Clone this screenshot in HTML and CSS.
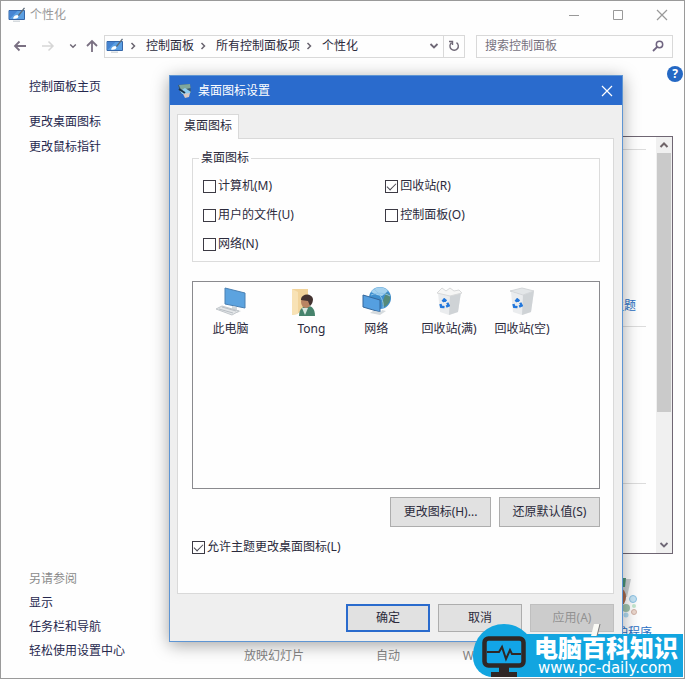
FILE: index.html
```html
<!DOCTYPE html>
<html lang="zh-CN">

<head>
    <meta charset="UTF-8">
    <title>个性化</title>
    <meta name="viewport" content="width=device-width, initial-scale=1.0">
    <link rel="stylesheet" href="styles.css">
</head>

<body>
    <!-- 共用图标 -->
    <svg class="defs" width="0" height="0" aria-hidden="true">
        <symbol id="icon-personal" viewBox="0 0 18 16">
            <path d="M1 3.500h15.500v9H1z" fill="#5b9fe2" stroke="#3566a8" />
            <path d="M1.500 4h8l-8 8z" fill="#4684d2" />
            <path d="M5 13.500h7v1.500H5z" fill="#d5dade" />
            <path d="M5 11.500c.5-2.500 2.500-3.500 4.500-3.500l1 1.500c-.5 2-3 2.500-5.500 2z" fill="#fff" />
            <path d="M10 8l6-7.500 1 .8-6 7.700z" fill="#5d6b78" />
        </symbol>
        <symbol id="icon-chevron" viewBox="0 0 10 10">
            <path d="M3.500 2l3 3-3 3" fill="none" stroke="#6a6570" stroke-width="1.500" />
        </symbol>
        <symbol id="icon-down" viewBox="0 0 10 10">
            <path d="M1.500 3l3.500 3.500L8.500 3" fill="none" stroke="#6f6876" stroke-width="1.800" />
        </symbol>
        <symbol id="icon-close" viewBox="0 0 12 12">
            <path d="M1 1l10 10M11 1L1 11" fill="none" stroke="currentColor" stroke-width="1.200" />
        </symbol>
        <symbol id="icon-recycle" viewBox="0 0 10 10">
            <path d="M3.200 3.300L4.800 1.300l1.900 1.500M7.500 4.300l1.300 2.500-2.300 1M5 8.300L2 8 1.300 5.400" fill="none" stroke="#2277dc" stroke-width="2.200" />
        </symbol>
    </svg>

    <div class="window">
        <!-- 窗口标题栏 -->
        <header class="titlebar">
            <svg class="app-icon" width="18" height="16"><use href="#icon-personal" /></svg>
            <span class="titlebar-text">个性化</span>
            <button class="win-btn" type="button" aria-label="最小化">
                <svg width="12" height="12" viewBox="0 0 12 12"><path d="M1 6.500h10" stroke="currentColor" /></svg>
            </button>
            <button class="win-btn" type="button" aria-label="最大化">
                <svg width="12" height="12" viewBox="0 0 12 12"><path d="M1.500 1.500h9v9h-9z" fill="none" stroke="currentColor" /></svg>
            </button>
            <button class="win-btn" type="button" aria-label="关闭">
                <svg width="12" height="12"><use href="#icon-close" /></svg>
            </button>
        </header>

        <!-- 导航和地址栏 -->
        <nav class="toolbar">
            <button class="nav-btn" type="button" aria-label="后退">
                <svg width="14" height="12" viewBox="0 0 14 12"><path d="M6.500 1.500L2 6l4.500 4.500M2 6h11" fill="none" stroke="#7a7082" stroke-width="1.800" /></svg>
            </button>
            <button class="nav-btn" type="button" aria-label="前进">
                <svg width="14" height="12" viewBox="0 0 14 12"><path d="M7.500 1.500L12 6l-4.500 4.500M12 6H1" fill="none" stroke="#d6d6d6" stroke-width="1.500" /></svg>
            </button>
            <button class="nav-btn nav-recent" type="button" aria-label="最近浏览的位置">
                <svg width="8" height="8"><use href="#icon-down" /></svg>
            </button>
            <button class="nav-btn nav-up" type="button" aria-label="上移">
                <svg width="14" height="14" viewBox="0 0 14 14"><path d="M2 7l5-5 5 5M7 2v11" fill="none" stroke="#7a7082" stroke-width="1.800" /></svg>
            </button>
            <div class="address">
                <svg width="18" height="16"><use href="#icon-personal" /></svg>
                <svg class="sep" width="10" height="10"><use href="#icon-chevron" /></svg>
                <a class="crumb" href="#">控制面板</a>
                <svg class="sep" width="10" height="10"><use href="#icon-chevron" /></svg>
                <a class="crumb" href="#">所有控制面板项</a>
                <svg class="sep" width="10" height="10"><use href="#icon-chevron" /></svg>
                <a class="crumb" href="#">个性化</a>
                <button class="address-drop" type="button" aria-label="以前的位置">
                    <svg width="10" height="10"><use href="#icon-down" /></svg>
                </button>
                <button class="address-refresh" type="button" aria-label="刷新">
                    <svg width="12" height="12" viewBox="0 0 12 12"><path d="M3.500 2.800a4.200 4.200 0 1 0 5-.2M1 1.500h3.500V5" fill="none" stroke="#6f6876" stroke-width="1.400" /></svg>
                </button>
            </div>
            <div class="search">
                <input class="search-input" type="text" aria-label="搜索控制面板" placeholder="搜索控制面板">
                <svg width="12" height="12" viewBox="0 0 12 12"><circle cx="7.500" cy="4.500" r="3.200" fill="none" stroke="#6f6480" stroke-width="1.500" /><path d="M5.200 6.800L1 11" stroke="#6f6480" stroke-width="1.800" /></svg>
            </div>
        </nav>

        <button class="help" type="button" aria-label="帮助">?</button>

        <div class="content">
            <!-- 左侧链接 -->
            <aside class="sidebar">
                <a class="side-link side-home" href="#">控制面板主页</a>
                <a class="side-link" href="#">更改桌面图标</a>
                <a class="side-link" href="#">更改鼠标指针</a>
                <div class="see-also">
                    <span class="see-also-title">另请参阅</span>
                    <a class="side-link" href="#">显示</a>
                    <a class="side-link" href="#">任务栏和导航</a>
                    <a class="side-link" href="#">轻松使用设置中心</a>
                </div>
            </aside>

            <!-- 主题列表 -->
            <main class="main">
                <div class="themes">
                    <div class="theme-list">
                        <section class="theme-group theme-group-mine"><a class="blue-link" href="#">保存主题</a></section>
                        <section class="theme-group theme-group-default"></section>
                        <section class="theme-group"></section>
                    </div>
                    <div class="scrollbar">
                        <svg width="10" height="10" viewBox="0 0 10 10"><path d="M1.500 7L5 3.500 8.500 7" fill="none" stroke="#6f6468" stroke-width="2" /></svg>
                        <div class="scroll-track"><div class="scroll-thumb"></div></div>
                        <svg width="10" height="10"><use href="#icon-down" /></svg>
                    </div>
                </div>
                <div class="settings">
                    <div class="setting"><span class="setting-value">放映幻灯片</span></div>
                    <div class="setting"><span class="setting-value">自动</span></div>
                    <div class="setting"><span class="setting-value">Windows 默认</span></div>
                    <div class="setting">
                        <svg width="48" height="48" viewBox="0 0 48 48">
                            <path d="M29 6h10l-4 18h-8z" fill="#c9ced0" />
                            <path d="M29 5h5l-1 9h-4z" fill="#4c9478" />
                            <ellipse cx="28" cy="24" rx="6" ry="9" fill="#a86a4c" />
                            <circle cx="41" cy="26" r="3.500" fill="#c5e4f5" stroke="#8cc2e4" />
                            <circle cx="34" cy="35" r="4" fill="#9fc4ae" />
                            <circle cx="42" cy="39" r="2.500" fill="#edd9cf" stroke="#d3b4a8" />
                            <circle cx="42" cy="33" r="2" fill="#c4e8cf" />
                            <circle cx="34" cy="42" r="2.500" fill="#b2dcf2" />
                        </svg>
                        <a class="blue-link" href="#">屏幕保护程序</a>
                    </div>
                </div>
            </main>
        </div>

        <!-- 桌面图标设置对话框 -->
        <form class="dialog" role="dialog" aria-labelledby="dialog-title">
            <div class="dialog-title">
                <svg width="16" height="16" viewBox="0 0 16 16">
                    <path d="M1 2l12-1 1 9-10 1z" fill="#3d5a6c" />
                    <path d="M2 2l11-1 .5 4L4 7z" fill="#7fa79c" />
                    <path d="M3 8l5-3 6 4-2 2H5z" fill="#8fcdf0" />
                    <path d="M2 6l6 4" stroke="#1b3348" stroke-width="2" />
                    <path d="M6 11l7-1-1 4-4 1z" fill="#d8c8c2" />
                </svg>
                <span id="dialog-title">桌面图标设置</span>
                <button class="dialog-close" type="button" aria-label="关闭">
                    <svg width="12" height="12"><use href="#icon-close" /></svg>
                </button>
            </div>
            <div class="dialog-body">
                <button class="tab" type="button">桌面图标</button>
                <div class="tab-panel">
                    <fieldset class="group">
                        <legend>桌面图标</legend>
                        <label class="check"><input type="checkbox">计算机(M)</label>
                        <label class="check"><input type="checkbox" checked>回收站(R)</label>
                        <label class="check"><input type="checkbox">用户的文件(U)</label>
                        <label class="check"><input type="checkbox">控制面板(O)</label>
                        <label class="check"><input type="checkbox">网络(N)</label>
                    </fieldset>

                    <div class="icon-list">
                        <div class="icon-item">
                            <svg width="32" height="32" viewBox="0 0 32 32">
                                <path d="M11 3l20 5v15l-20-4z" fill="#5ca3df" stroke="#4a80b2" />
                                <path d="M18 21l5 1v3l4 1-4 2-8-3 3-1z" fill="#d3d8db" />
                                <path d="M2 24l6-3 17 5-7 4z" fill="#e3e6e8" stroke="#c2c7cb" />
                                <path d="M5 24l14 4M8 22l14 4" stroke="#b8bec4" />
                            </svg>
                            <span>此电脑</span>
                        </div>
                        <div class="icon-item icon-item-user">
                            <svg width="32" height="32" viewBox="0 0 32 32">
                                <path d="M5 4h16v18l-11 7-5 1z" fill="#f2d49b" />
                                <path d="M5 4l6 3v22l-6 1z" fill="#f8e2b5" />
                                <path d="M12 31c0-8 5-10 9-10s7 3 7 10z" fill="#46836c" />
                                <path d="M15 23l3 7 3-7z" fill="#d7e6df" />
                                <ellipse cx="19" cy="17" rx="5" ry="6" fill="#b98462" />
                                <path d="M14 14c1-6 11-6 12 0 0 3-1 5-3 7l-2-5-7-1z" fill="#443331" />
                            </svg>
                            <span>Tong</span>
                        </div>
                        <div class="icon-item">
                            <svg width="32" height="32" viewBox="0 0 32 32">
                                <circle cx="20" cy="13" r="11" fill="#3f8fce" />
                                <path d="M11 7c4-6 13-6 17-1l-6 5-5-1z" fill="#a5d2ef" />
                                <path d="M26 8l4 2c1 6-2 10-6 12l-2-4z" fill="#568a79" />
                                <path d="M14 4c7 6 10 12 9 19M11 10c7-3 14-2 19 1" fill="none" stroke="#8ec4ea" />
                                <path d="M3 10l17 5v12L3 22z" fill="#559fe0" stroke="#35679b" />
                                <path d="M13 26l8 1 1-2 4 1-6 4-10-2z" fill="#d5dadd" />
                            </svg>
                            <span>网络</span>
                        </div>
                        <div class="icon-item">
                            <svg width="32" height="32" viewBox="0 0 32 32">
                                <path d="M5 8l12 2 11-3-3 20-9 3-9-3z" fill="#eaecee" />
                                <path d="M17 10l11-3-3 20-9 3z" fill="#cfd3d6" />
                                <path d="M4 8l5-5 4 3 4-3 4 3 5-1 3 3-12 3z" fill="#f6f6f5" stroke="#d8d9da" />
                                <use href="#icon-recycle" x="6" y="13" width="11" height="11" />
                            </svg>
                            <span>回收站(满)</span>
                        </div>
                        <div class="icon-item">
                            <svg width="32" height="32" viewBox="0 0 32 32">
                                <path d="M5 7l12 3 11-4-3 21-9 3-9-3z" fill="#eaecee" />
                                <path d="M17 10l11-4-3 21-9 3z" fill="#cfd3d6" />
                                <path d="M4 6l12-3 12 3-11 4z" fill="#e3e6e8" stroke="#d3d6d9" />
                                <use href="#icon-recycle" x="6" y="13" width="11" height="11" />
                            </svg>
                            <span>回收站(空)</span>
                        </div>
                    </div>

                    <div class="list-actions">
                        <button class="btn" type="button">更改图标(H)...</button>
                        <button class="btn" type="button">还原默认值(S)</button>
                    </div>
                    <label class="check"><input type="checkbox" checked>允许主题更改桌面图标(L)</label>
                </div>
                <div class="dialog-actions">
                    <button class="btn btn-default" type="button">确定</button>
                    <button class="btn" type="button">取消</button>
                    <button class="btn" type="button" disabled>应用(A)</button>
                </div>
            </div>
        </form>

        <!-- 站点水印 -->
        <div class="watermark">
            <svg class="watermark-pen" width="16" height="12" viewBox="0 0 16 12"><path d="M4 0h6L7 12H1z" fill="#fafaf5" /><path d="M10 0L7 12" stroke="#777" /></svg>
            <div class="watermark-logo">
                <svg width="46" height="42" viewBox="0 0 46 42">
                    <rect x="2.500" y="2.500" width="39" height="27" rx="4" fill="#12a5e8" stroke="#2f2725" stroke-width="4.500" />
                    <path d="M5 16h12l3-5 4 12 4-9 2 4h9" fill="none" stroke="#2f2725" stroke-width="2" />
                    <path d="M17 31h10v5h8v5H9v-5h8z" fill="#2f2725" />
                </svg>
            </div>
            <div class="watermark-text">
                <span class="watermark-name">电脑百科知识</span>
                <span class="watermark-url">www.pc-daily.com</span>
            </div>
        </div>
    </div>
</body>

</html>
```
FILE: styles.css
```css
* {
    box-sizing: border-box;
}

body {
    margin: 0;
    font-family: "Noto Sans", "Noto Sans CJK SC", sans-serif;
    font-size: 12px;
    line-height: 16px;
    color: #2b2a3c;
    background-color: #fefefe;
}

button,
input {
    font: inherit;
    color: inherit;
}

button {
    padding: 0;
    border: none;
    background: none;
}

a {
    color: inherit;
    text-decoration: none;
}

svg {
    display: block;
    flex: none;
}

.defs {
    position: absolute;
}

.window {
    position: relative;
    display: flex;
    flex-direction: column;
    min-height: 100vh;
    overflow: hidden;
    border: 1px solid #9a9a9a;
}

/* 标题栏 */
.titlebar {
    display: flex;
    align-items: center;
    height: 28px;
    padding-left: 7px;
    color: #999;
}

.titlebar-text {
    flex: 1;
    margin-left: 4px;
}

.win-btn {
    display: flex;
    align-items: center;
    justify-content: center;
    width: 44px;
    height: 28px;
}

/* 地址栏 */
.toolbar {
    display: flex;
    align-items: center;
    height: 24px;
    margin-top: 5px;
    padding: 0 11px 0 12px;
}

.nav-btn {
    margin-right: 14px;
}

.nav-recent {
    margin-right: 8px;
}

.nav-up {
    margin-right: 5px;
}

.address {
    display: flex;
    align-items: center;
    flex: 2;
    height: 23px;
    padding-left: 1px;
    border: 1px solid #d9d9d9;
}

.sep {
    margin: 0 8px 0 4px;
}

.address-drop {
    margin-left: auto;
    padding: 0 4px;
}

.address-refresh {
    height: 21px;
    padding: 0 4px;
    border-left: 1px solid #d9d9d9;
}

.search {
    display: flex;
    align-items: center;
    flex: 1;
    min-width: 0;
    height: 23px;
    margin-left: 11px;
    padding: 0 8px;
    border: 1px solid #d9d9d9;
}

.search-input {
    flex: 1;
    min-width: 0;
    padding: 0;
    border: none;
    outline: none;
    background: none;
}

.search-input::placeholder {
    color: #77727e;
}

.help {
    position: absolute;
    top: 65px;
    right: 1px;
    width: 16px;
    height: 16px;
    border-radius: 50%;
    background-color: #2468c4;
    color: #fff;
    font-weight: bold;
}

/* 左侧 */
.content {
    display: flex;
    flex: 1;
}

.sidebar {
    display: flex;
    flex-direction: column;
    gap: 9px;
    width: 216px;
    padding: 21px 0 19px 28px;
}

.side-home {
    margin-bottom: 10px;
}

.side-link {
    color: #26284e;
}

.see-also {
    display: flex;
    flex-direction: column;
    gap: 8px;
    margin-top: auto;
}

.see-also-title {
    color: #8a8a8a;
}

/* 主题列表 */
.main {
    display: flex;
    flex-direction: column;
    flex: 1;
    padding: 78px 11px 14px 0;
}

.themes {
    display: flex;
    flex: 1;
    border: 1px solid #6f6673;
}

.theme-list {
    flex: 1;
    padding: 12px 10px 0 0;
}

.theme-group {
    border-top: 1px solid #dcdcdc;
}

.theme-group-mine {
    height: 177px;
    padding: 148px 10px 0 0;
    text-align: right;
}

.theme-group-default {
    height: 157px;
}

.blue-link {
    color: #2a6fc4;
}

.scrollbar {
    display: flex;
    flex-direction: column;
    align-items: center;
    width: 16px;
    padding: 3px 0;
    background-color: #f0f0f0;
}

.scroll-track {
    flex: 1;
    width: 14px;
    padding-top: 3px;
}

.scroll-thumb {
    height: 67%;
    background-color: #cacaca;
}

.settings {
    display: flex;
    height: 110px;
    padding-top: 19px;
}

.setting {
    display: flex;
    flex-direction: column;
    align-items: center;
    flex: 1;
}

.setting .blue-link {
    margin-top: 4px;
}

.setting-value {
    margin-top: auto;
    color: #858585;
}

/* 对话框 */
.dialog {
    position: absolute;
    top: 74px;
    left: 168px;
    right: 61px;
    border: 1px solid #5e95d3;
    background-color: #efefef;
    box-shadow: 0 3px 16px rgba(0, 0, 0, 0.36);
}

.dialog-title {
    display: flex;
    align-items: center;
    gap: 5px;
    height: 29px;
    padding: 0 9px 0 7px;
    background-color: #2a6bcd;
    color: #fff;
}

.dialog-close {
    margin-left: auto;
}

.dialog-body {
    padding: 9px 8px 9px 7px;
}

.tab {
    position: relative;
    display: block;
    height: 25px;
    margin-bottom: -1px;
    padding: 0 6px 3px;
    border: 1px solid #d9d9d9;
    border-bottom: none;
    background-color: #fefefe;
}

.tab-panel {
    padding: 11px 13px 38px 14px;
    border: 1px solid #d9d9d9;
    background-color: #fefefe;
}

.group {
    display: grid;
    grid-template-columns: 46% 54%;
    row-gap: 13px;
    margin: 0;
    padding: 12px 0 9px 10px;
    border: 1px solid #dcdcdc;
}

.group legend {
    margin-left: -4px;
    padding: 0 2px;
}

.check {
    display: flex;
    align-items: center;
    gap: 2px;
}

.check input {
    appearance: none;
    width: 13px;
    height: 13px;
    margin: 0;
    border: 1px solid #3c3a44;
    background-color: #fff;
}

.check input:checked::before {
    content: "";
    display: block;
    width: 8px;
    height: 4px;
    margin: 2px 0 0 1px;
    border: solid #4a4852;
    border-width: 0 0 1px 1px;
    transform: rotate(-45deg);
}

.icon-list {
    display: flex;
    height: 208px;
    margin-top: 19px;
    padding: 3px 0 0 1px;
    border: 1px solid #8a8a8e;
}

.icon-item {
    display: flex;
    flex-direction: column;
    align-items: center;
    gap: 4px;
    width: 18%;
}

.icon-item-user span {
    padding-left: 16px;
}

.list-actions {
    display: flex;
    justify-content: flex-end;
    gap: 8px;
    margin: 8px 0 12px;
}

.btn {
    width: 84px;
    height: 28px;
    border: 1px solid #adadad;
    background-color: #e1e1e1;
}

.list-actions .btn {
    width: 101px;
    height: 30px;
}

.btn-default {
    border: 2px solid #2a6bcd;
}

.btn:disabled {
    border-color: #bfbfbf;
    background-color: #cccccc;
    color: #929292;
}

.dialog-actions {
    display: flex;
    justify-content: flex-end;
    gap: 8px;
    margin-top: 10px;
}

/* 水印 */
.watermark {
    position: absolute;
    right: 1px;
    bottom: 1px;
    display: flex;
    align-items: flex-end;
    height: 53px;
    overflow: hidden;
    color: #fff;
}

.watermark-pen {
    position: absolute;
    top: 0;
    right: 77px;
}

.watermark-logo {
    z-index: 1;
    width: 62px;
    height: 53px;
    padding: 12px 0 0 9px;
    border-radius: 31px 31px 0 20px;
    background-color: #12a5e0;
}

.watermark-text {
    display: flex;
    flex-direction: column;
    width: 180px;
    height: 43px;
    margin-left: -32px;
    padding-left: 31px;
    background-color: #12a5e0;
    white-space: nowrap;
}

.watermark-name {
    font-size: 24px;
    font-weight: 900;
    line-height: 27px;
}

.watermark-url {
    padding-left: 4px;
    font-family: "DejaVu Sans", sans-serif;
    font-size: 15px;
    line-height: 14px;
}
```
